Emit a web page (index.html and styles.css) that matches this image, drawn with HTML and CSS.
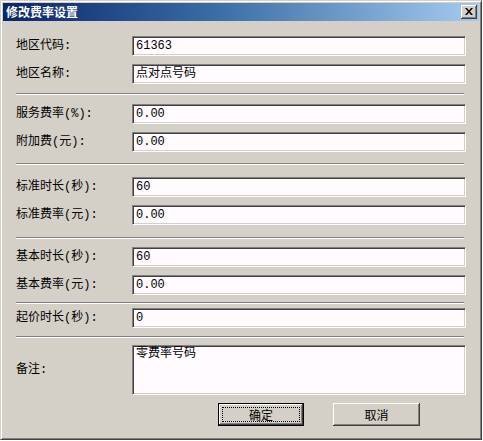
FILE: index.html
```html
<!DOCTYPE html>
<html>
<head>
<meta charset="utf-8">
<link rel="stylesheet" href="styles.css">
</head>
<body>
<div class="window">
  <div class="titlebar">
    <span class="title">修改费率设置</span>
    <span class="close"><svg width="8" height="7" viewBox="0 0 8 7"><path d="M0 0h2l2 2.5L6 0h2L5 3.5 8 7H6L4 4.5 2 7H0l3-3.5z" fill="#000"/></svg></span>
  </div>
  <div class="content">
    <div class="row first"><span class="label">地区代码:</span><span class="field">61363</span></div>
    <div class="row"><span class="label">地区名称:</span><span class="field">点对点号码</span></div>
    <div class="sep s1"></div>
    <div class="row after1"><span class="label">服务费率(%):</span><span class="field">0.00</span></div>
    <div class="row"><span class="label">附加费(元):</span><span class="field">0.00</span></div>
    <div class="sep s2"></div>
    <div class="row after2"><span class="label">标准时长(秒):</span><span class="field">60</span></div>
    <div class="row"><span class="label">标准费率(元):</span><span class="field">0.00</span></div>
    <div class="sep s3"></div>
    <div class="row after3"><span class="label">基本时长(秒):</span><span class="field">60</span></div>
    <div class="row"><span class="label">基本费率(元):</span><span class="field">0.00</span></div>
    <div class="sep s4"></div>
    <div class="row after4"><span class="label">起价时长(秒):</span><span class="field">0</span></div>
    <div class="sep s5"></div>
    <div class="row memo"><span class="label">备注:</span><span class="field area">零费率号码</span></div>
    <div class="buttons">
      <button class="btn default"><span class="focus">确定</span></button>
      <button class="btn">取消</button>
    </div>
  </div>
</div>
</body>
</html>
```

FILE: styles.css
```css
body {
  margin: 0;
  background: #ffffff;
  font-family: "Liberation Mono", "Noto Sans CJK SC", monospace;
  font-size: 12px;
  color: #000;
}
.window {
  width: 482px;
  height: 440px;
  box-sizing: border-box;
  background: #d4d0c8;
  border: 1px solid;
  border-color: #d4d0c8 #404040 #404040 #d4d0c8;
  box-shadow: inset 1px 1px #ffffff, inset -1px -1px #808080;
  padding: 2px;
  display: flex;
  flex-direction: column;
}
.titlebar {
  height: 18px;
  flex: none;
  background: linear-gradient(90deg, #0a246a 0%, #3a6ea5 45%, #a6caf0 100%);
  display: flex;
  align-items: center;
  justify-content: space-between;
  padding: 0 2px 0 3px;
}
.title {
  color: #fff;
  font-family: "Noto Sans CJK SC", sans-serif;
  font-weight: bold;
  font-size: 12px;
  line-height: 14px;
}
.close {
  width: 16px;
  height: 14px;
  box-sizing: border-box;
  background: #d4d0c8;
  box-shadow: inset -1px -1px #404040, inset 1px 1px #ffffff, inset -2px -2px #808080;
  display: flex;
  align-items: center;
  justify-content: center;
  padding: 0 1px 1px 0;
}
.content {
  display: flex;
  flex-direction: column;
  padding: 0 13px 0 13px;
}
.row {
  display: flex;
  align-items: center;
  margin-top: 8px;
}
.row.first { margin-top: 15px; }
.row.after1 { margin-top: 9px; }
.row.after2 { margin-top: 12px; }
.row.after3 { margin-top: 8px; }
.row.after4 { margin-top: 4px; }
.row.memo { margin-top: 7px; }
.label {
  width: 116px;
  flex: none;
  line-height: 14px;
  white-space: nowrap;
}
.field {
  flex: 1;
  height: 20px;
  box-sizing: border-box;
  background: #fffbff;
  border: 1px solid;
  border-color: #808080 #ffffff #ffffff #808080;
  box-shadow: inset 1px 1px #404040, inset -1px -1px #d4d0c8;
  padding: 2px 3px 0 3px;
  line-height: 15px;
  white-space: nowrap;
}
.field.area {
  height: 50px;
  padding-top: 1px;
}
.sep {
  height: 1px;
  background: #808080;
  border-bottom: 1px solid #ffffff;
  margin-right: 2px;
}
.sep.s1 { margin-top: 9px; }
.sep.s2 { margin-top: 11px; }
.sep.s3 { margin-top: 12px; }
.sep.s4 { margin-top: 7px; }
.sep.s5 { margin-top: 8px; }
.buttons {
  display: flex;
  gap: 29px;
  padding-left: 202px;
  margin-top: 8px;
}
.btn {
  width: 87px;
  height: 23px;
  box-sizing: border-box;
  background: #d4d0c8;
  border: none;
  box-shadow: inset -1px -1px #404040, inset 1px 1px #ffffff, inset -2px -2px #808080;
  font-family: "Liberation Mono", "Noto Sans CJK SC", monospace;
  font-size: 12px;
  color: #000;
  padding: 0;
  display: flex;
  align-items: center;
  justify-content: center;
}
.btn.default {
  width: 86px;
  border: 1px solid #000;
  box-shadow: inset -1px -1px #404040, inset 1px 1px #ffffff, inset -2px -2px #808080;
  padding: 3px;
}
.focus {
  flex: 1;
  align-self: stretch;
  border: 1px dotted #000;
  display: flex;
  align-items: center;
  justify-content: center;
}
```
